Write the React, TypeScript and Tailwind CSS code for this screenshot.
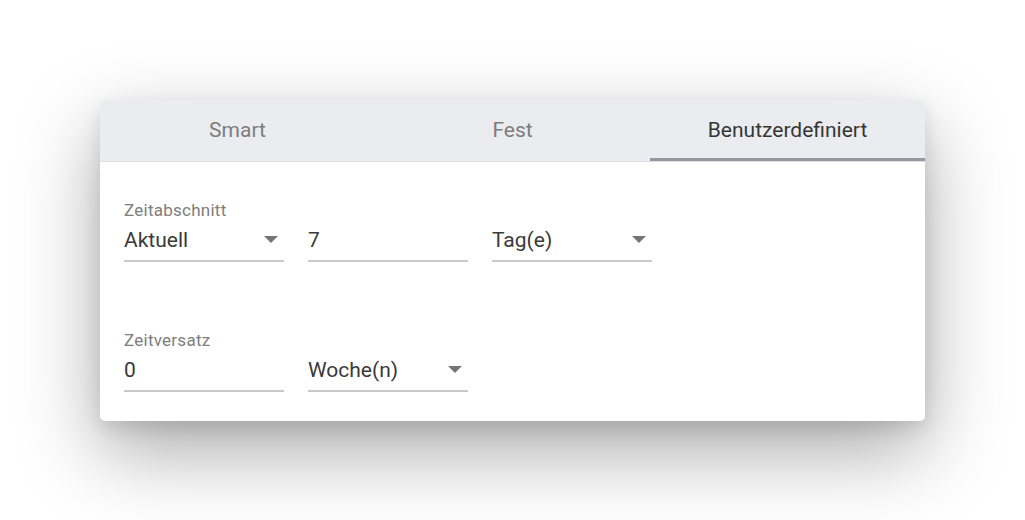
import { useState } from 'react'

const font = { fontFamily: 'Roboto, "Liberation Sans", sans-serif' }

const tabs = ['Smart', 'Fest', 'Benutzerdefiniert']

function Caret() {
  return (
    <svg width="14" height="7" viewBox="0 0 14 7" className="shrink-0 mr-[6px]">
      <path d="M0 0h14L7 7z" fill="#757575" />
    </svg>
  )
}

function Field({ label, value, select }: { label?: string; value: string; select?: boolean }) {
  return (
    <div className="flex flex-col w-[160px]">
      <div className="h-[20px] text-[17px] leading-[20px] tracking-[0.25px] text-[#7d7d7d]">{label ?? '\u00a0'}</div>
      <div className="mt-[6px] pb-[6px] border-b-2 border-[#c9c9cd] flex items-center justify-between">
        <span className="text-[21px] leading-[28px] text-[#3a3a3a]">{value}</span>
        {select && <Caret />}
      </div>
    </div>
  )
}

export default function App() {
  const [active, setActive] = useState(2)

  return (
    <div className="h-[520px] w-full bg-white flex items-center justify-center" style={font}>
      <div className="w-[825px] bg-white rounded-[5px] overflow-hidden shadow-[0_30px_80px_rgba(0,0,0,0.34),0_8px_18px_rgba(0,0,0,0.1)]">
        <div className="flex h-[62px] bg-[#ebecef] border-b border-[#dedfe2]">
          {tabs.map((t, i) => (
            <button
              key={t}
              onClick={() => setActive(i)}
              className={
                i === active
                  ? 'flex-1 flex items-center justify-center text-[21px] text-[#363636] border-b-[3px] border-[#96979f] pt-[5px]'
                  : 'flex-1 flex items-center justify-center text-[21px] text-[#7d7d7d] border-b-[3px] border-transparent pt-[5px]'
              }
            >
              {t}
            </button>
          ))}
        </div>

        <div className="pt-[38px] pb-[29px] px-[24px] flex flex-col gap-[68px]">
          <div className="flex gap-[24px]">
            <Field label="Zeitabschnitt" value="Aktuell" select />
            <Field value="7" />
            <Field value="Tag(e)" select />
          </div>
          <div className="flex gap-[24px]">
            <Field label="Zeitversatz" value="0" />
            <Field value="Woche(n)" select />
          </div>
        </div>
      </div>
    </div>
  )
}
